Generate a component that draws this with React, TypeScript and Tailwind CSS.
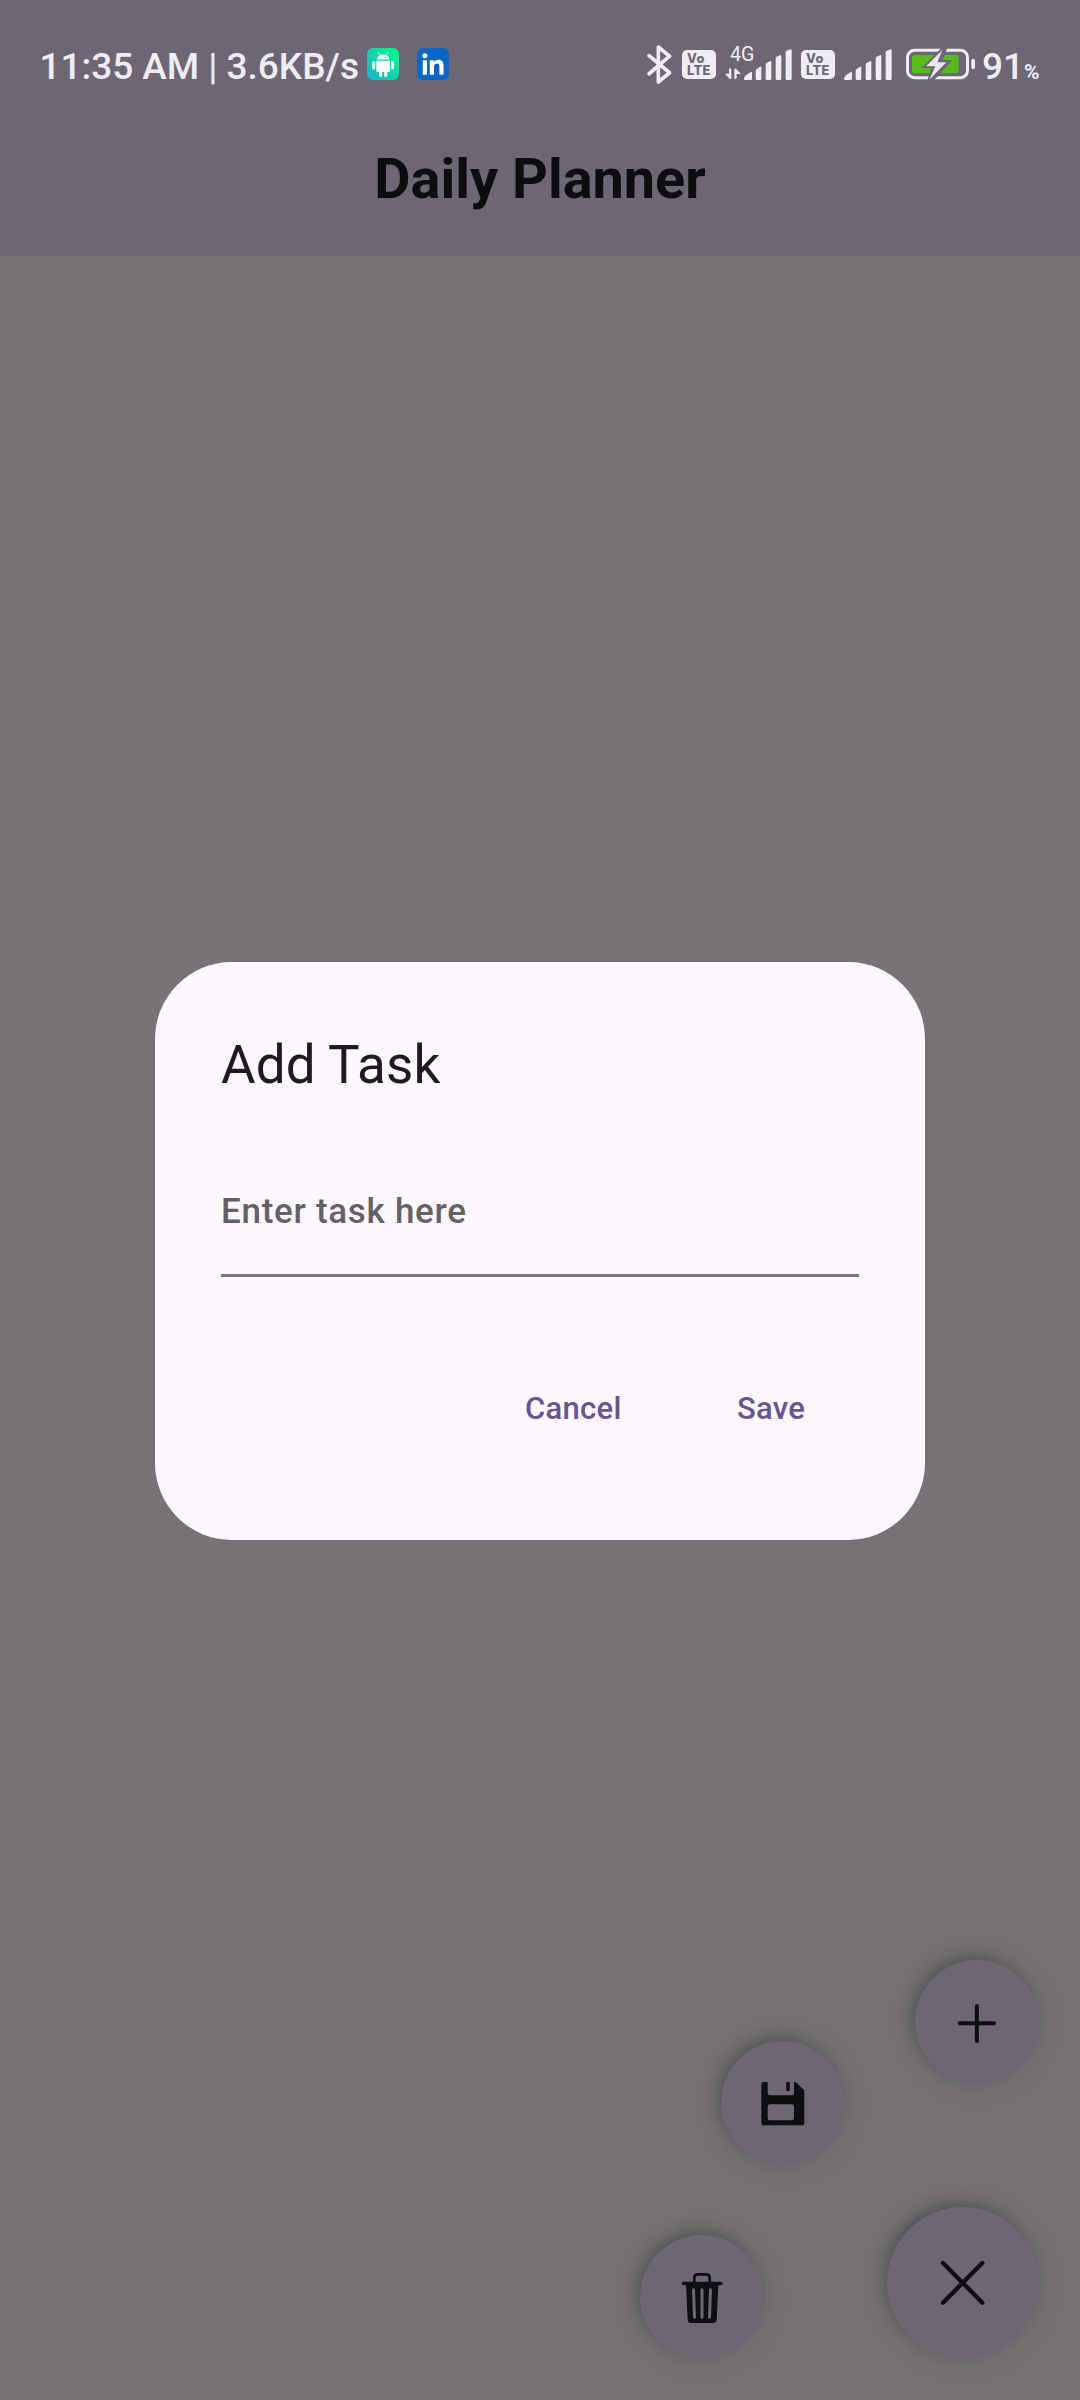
import React from "react";

function AndroidIcon() {
  return (
    <svg width="32" height="32" viewBox="0 0 32 32">
      <defs>
        <linearGradient id="droid" x1="0" y1="1" x2="1" y2="0">
          <stop offset="0" stopColor="#1cb0cc" />
          <stop offset="0.55" stopColor="#10d8a4" />
          <stop offset="1" stopColor="#00fb85" />
        </linearGradient>
      </defs>
      <rect width="32" height="32" rx="6" fill="url(#droid)" />
      <g fill="#f4fffb">
        <path d="M10 11.6C10.2 8.6 12.9 6.4 16.1 6.4S22 8.6 22.2 11.6Z" />
        <path d="M9.3 12.8H22.9V22.6Q22.9 24 21.5 24H10.7Q9.3 24 9.3 22.6Z" />
        <rect x="5.2" y="13" width="3" height="8.4" rx="1.5" />
        <rect x="24" y="13" width="3" height="8.4" rx="1.5" />
        <rect x="12" y="22" width="3" height="7" rx="1.5" />
        <rect x="17.2" y="22" width="3" height="7" rx="1.5" />
      </g>
      <path d="M13 7.4L11.4 4.6M19.2 7.4L20.8 4.6" stroke="#f4fffb" strokeWidth="0.9" strokeLinecap="round" />
      <circle cx="13.5" cy="9.4" r="0.7" fill="#10d8a4" />
      <circle cx="18.7" cy="9.4" r="0.7" fill="#10d8a4" />
    </svg>
  );
}

function LinkedInIcon() {
  return (
    <svg width="32" height="32" viewBox="0 0 32 32">
      <rect width="32" height="32" rx="6" fill="#0a66c2" />
      <circle cx="7.9" cy="7.8" r="2.5" fill="#fff" />
      <path
        fill="#fff"
        d="M5.8 12.2H10V26.8H5.8ZM12.8 12.2H16.8V14.2C17.6 12.8 19.2 11.8 21.2 11.8C25.4 11.8 26.6 14.5 26.6 18.4V26.8H22.4V19.2C22.4 17.2 22.2 15.4 20 15.4C17.8 15.4 17 17 17 19.2V26.8H12.8Z"
      />
    </svg>
  );
}

function BluetoothIcon() {
  return (
    <svg width="25" height="39" viewBox="80 42 75 118" fill="none" stroke="#efedf1" strokeWidth="11" strokeLinecap="round" strokeLinejoin="round">
      <path d="M86 74L148 126L114 154V48L148 76L86 129" />
    </svg>
  );
}

function VolteBadge() {
  return (
    <div className="flex h-[29px] w-[34px] flex-col rounded-[5px] bg-[#efedf1] pt-[2.5px] pl-[5px] font-['Inter'] text-[12.8px] leading-[12.2px] font-extrabold tracking-[0.4px] text-[#6d6675]">
      <span>Vo</span>
      <span>LTE</span>
    </div>
  );
}

function Bars() {
  return (
    <g fill="#efedf1">
      <path d="M0 86L6 78L20 68Q24 66 24 71V88Q24 92 20 92H3Q0 92 0 89Z" />
      <path d="M35 64Q35 61 38 59L48 52Q52 50 52 54V88Q52 92 48 92H39Q35 92 35 88Z" />
      <path d="M65 46Q65 43 68 41L78 36Q82 34 82 38V88Q82 92 78 92H69Q65 92 65 88Z" />
      <path d="M95 27Q95 24 98 22L108 18Q112 16 112 20V88Q112 92 108 92H99Q95 92 95 88Z" />
      <path d="M125 9Q125 6 128 4L139 0Q143 -1 143 4V88Q143 92 139 92H129Q125 92 125 88Z" />
    </g>
  );
}

function MobileDataSignal() {
  return (
    <svg width="68" height="42" viewBox="315 24 204 126">
      <text x="330" y="92" fill="#efedf1" fontFamily="Roboto" fontSize="59" fontWeight="400">
        4G
      </text>
      <path fill="#efedf1" d="M327 117Q334 112 334 120V147H329L315 131H327ZM343 116H348L363 132H350V143Q350 147 343 147Z" />
      <g transform="translate(372 58)">
        <Bars />
      </g>
    </svg>
  );
}

function Signal() {
  return (
    <svg width="48" height="31" viewBox="0 -1 144 93">
      <Bars />
    </svg>
  );
}

function Battery() {
  return (
    <svg width="69" height="34" viewBox="198 51 207 102">
      <rect x="202.500" y="61" width="180" height="82" rx="21" fill="none" stroke="#efedf1" strokeWidth="9" />
      <rect x="216" y="75" width="140" height="55" rx="7" fill="#55bc1c" />
      <path d="M314 44L244 114H274L258 164H270L338 90H308L326 44Z" fill="#6d6675" />
      <path d="M307 60L258 109H286L268 149L319 97H292Z" fill="#e9e7eb" />
      <rect x="394" y="87" width="11" height="30" rx="4" fill="#efedf1" />
    </svg>
  );
}

function StatusBar() {
  return (
    <div className="flex h-[128px] items-center pl-[39.500px] text-[37px] font-medium text-[#efedf1]">
      <span className="w-[327.500px] pt-[5px] leading-[44px] tracking-[-0.04px] whitespace-nowrap">11:35 AM | 3.6KB/s</span>
      <AndroidIcon />
      <span className="w-[18px]" />
      <LinkedInIcon />
      <div className="ml-[198px] flex h-[44px] items-center">
        <BluetoothIcon />
        <div className="ml-[10px] pt-px">
          <VolteBadge />
        </div>
        <div className="-mt-[10px] ml-[9px]">
          <MobileDataSignal />
        </div>
        <div className="ml-[8px] pt-px">
          <VolteBadge />
        </div>
        <div className="ml-[9px] pt-px">
          <Signal />
        </div>
        <div className="ml-[14px]">
          <Battery />
        </div>
        <div className="ml-[7px] flex items-baseline pt-[5px] leading-[44px]">
          <span>91</span>
          <span className="text-[21px] leading-[24px] font-bold">%</span>
        </div>
      </div>
    </div>
  );
}

type FabProps = { label: string; place: string; size: number; viewBox: string; children: React.ReactNode };

function Fab({ label, place, size, viewBox, children }: FabProps) {
  return (
    <button
      aria-label={label}
      className={`absolute rounded-full bg-[#6d6675] shadow-[-4px_-5px_13px_rgba(40,45,40,0.38),0_0_32px_rgba(95,102,95,0.4)] ${place}`}
    >
      <svg width={size} height={size} viewBox={viewBox} fill="none" stroke="#0f0e11" strokeLinecap="round" strokeLinejoin="round">
        {children}
      </svg>
    </button>
  );
}

function AddTaskDialog() {
  return (
    <div role="dialog" className="absolute top-[962px] left-[155px] flex h-[577.500px] w-[770px] flex-col rounded-[77px] bg-[#fef7ff] px-[66px] pt-[67px]">
      <h2 className="text-[53px] leading-[72px] tracking-[0.15px] text-[#1d1b20]">Add Task</h2>
      <div className="mt-[47px] flex h-[129px] items-start border-b-[3px] border-[#7c767f] text-[35px] leading-[128px] font-medium tracking-[0.7px] text-[#646166]">
        Enter task here
      </div>
      <div className="mt-[77px] flex text-[31px] leading-[110px] font-medium tracking-[0.3px] text-[#66558e]">
        <button className="ml-[304px] w-[212px] text-left">Cancel</button>
        <button className="text-left">Save</button>
      </div>
    </div>
  );
}

export default function App() {
  return (
    <div className="relative h-[2400px] w-[1080px] overflow-hidden bg-[#777275] font-['Roboto',sans-serif]">
      <header className="h-[256px] bg-[#6d6675]">
        <StatusBar />
        <h1 className="pt-[3px] text-center text-[55.8px] leading-[96px] font-bold text-[#0d0c0f]">Daily Planner</h1>
      </header>

      <AddTaskDialog />

      <Fab label="Add" place="left-[915px] top-[1960px]" size={124} viewBox="105 90 372 372">
        <path d="M290.500 228V333M239 280H342" strokeWidth="12" />
      </Fab>
      <Fab label="Save planner" place="left-[720.500px] top-[2040.500px]" size={124} viewBox="92 92 372 372">
        <g fill="#0f0e11" stroke="none">
          <path
            fillRule="evenodd"
            d="M220 215H232V248Q232 255 239 255H304Q311 255 311 248V215H316L342 240V337Q342 345 334 345H221Q213 345 213 337V223Q213 215 220 215ZM239 282Q232 282 232 289V323Q232 330 239 330H304Q311 330 311 323V289Q311 282 304 282Z"
          />
          <rect x="287.500" y="215" width="11" height="27" rx="3" />
        </g>
      </Fab>
      <Fab label="Delete" place="left-[640px] top-[2235px]" size={124} viewBox="90 105 372 372">
        <path d="M220 250.500H333" strokeWidth="10" />
        <path d="M253 248V233Q253 223 263 223H289Q299 223 299 233V248" strokeWidth="8" />
        <path d="M228 254H325L320 360Q319 369 310 369H243Q234 369 233 360Z" fill="#0f0e11" stroke="none" />
        <path d="M250.500 269L253.500 352M276 269V352M301.500 269L298.500 352" stroke="#6d6675" strokeWidth="9" />
      </Fab>
      <Fab label="Close" place="left-[887.300px] top-[2207.300px]" size={152} viewBox="82 82 456 456">
        <path d="M250 250L368 369M368 250L250 369" strokeWidth="13" />
      </Fab>
    </div>
  );
}
